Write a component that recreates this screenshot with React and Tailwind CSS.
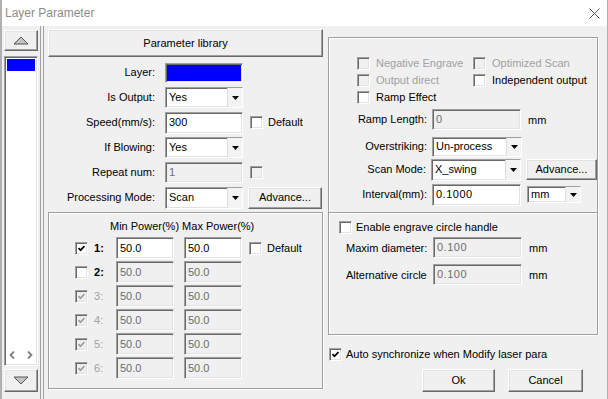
import React from 'react'

const sunken = 'border border-t-[#a0a0a0] border-l-[#a0a0a0] border-b-white border-r-white shadow-[inset_1px_1px_0_#696969,inset_-1px_-1px_0_#e3e3e3]'
const raised = 'border border-t-white border-l-white border-b-[#696969] border-r-[#696969] shadow-[inset_-1px_-1px_0_#a0a0a0,inset_1px_1px_0_#e3e3e3] bg-[#f0f0f0]'
const groupBox = 'border border-[#a0a0a0] shadow-[inset_1px_1px_0_#ffffff,1px_1px_0_#ffffff]'

function Check({ checked, disabled }) {
  return (
    <span className={`${sunken} w-[13px] h-[13px] flex items-center justify-center shrink-0 ${disabled ? 'bg-[#f0f0f0]' : 'bg-white'}`}>
      {checked && (
        <svg width="7" height="7" viewBox="0 0 7 7">
          <path d="M0.5 3 L2.5 5.2 L6.5 1" stroke={disabled ? '#a0a0a0' : '#000000'} strokeWidth="1.7" fill="none" />
        </svg>
      )}
    </span>
  )
}

function CheckLabel({ checked, disabled, children, gap = 'ml-[6px]' }) {
  return (
    <div className="flex items-center">
      <Check checked={checked} disabled={disabled} />
      <span className={`${gap} ${disabled ? 'text-[#a0a0a0]' : 'text-black'}`}>{children}</span>
    </div>
  )
}

function Field({ value, disabled, className = '' }) {
  return (
    <div className={`${sunken} px-[3px] flex items-center ${disabled ? 'bg-[#f0f0f0] text-[#6d6d6d]' : 'bg-white text-black'} ${className}`}>
      {value}
    </div>
  )
}

function Arrow() {
  return (
    <svg width="7" height="4" viewBox="0 0 7 4">
      <path d="M0 0 H7 L3.5 4 Z" fill="#000000" />
    </svg>
  )
}

function Combo({ value, className = '' }) {
  return (
    <div className={`${sunken} bg-white flex ${className}`}>
      <span className="flex-1 flex items-center pl-[3px]">{value}</span>
      <span className="w-[15px] border-l border-[#dcdcdc] bg-[#f3f3f3] flex items-center justify-center">
        <Arrow />
      </span>
    </div>
  )
}

function Button({ children, className = '' }) {
  return <div className={`${raised} flex items-center justify-center ${className}`}>{children}</div>
}

function FormRow({ label, children, mt = 'mt-[4px]' }) {
  return (
    <div className={`flex items-center h-[21px] ${mt}`}>
      <span className="w-[107px] text-right">{label}</span>
      <div className="ml-[10px] flex items-center">{children}</div>
    </div>
  )
}

function PowerRow({ n, checked, enabled, disabled, showDefault }) {
  return (
    <div className="flex items-center h-[22px]">
      <span className="ml-[26px]"><Check checked={checked} disabled={disabled} /></span>
      <span className={`ml-[6px] w-[22px] ${disabled ? 'text-[#a0a0a0]' : 'font-bold text-black'}`}>{n}:</span>
      <Field value="50.0" disabled={!enabled} className="w-[58px] h-[22px]" />
      <Field value="50.0" disabled={!enabled} className="ml-[10px] w-[58px] h-[22px]" />
      {showDefault && (
        <div className="ml-[7px]"><CheckLabel gap="ml-[5px]">Default</CheckLabel></div>
      )}
    </div>
  )
}

function RightRow({ label, children, mt }) {
  return (
    <div className={`flex items-center h-[21px] ${mt}`}>
      <span className="w-[98px] text-right">{label}</span>
      <div className="ml-[5px] flex items-center">{children}</div>
    </div>
  )
}

export default function App() {
  return (
    <div className="w-[608px] h-[399px] bg-[#f0f0f0] overflow-hidden flex flex-col border-l-2 border-r border-[#b0b0b0] font-['Liberation_Sans',Arial,sans-serif] text-[11px] leading-[13px] text-black">
      {/* Title bar */}
      <div className="h-[26px] shrink-0 bg-white flex items-center justify-between pl-[3px] pr-[7px]">
        <span className="text-[12px] text-[#8c8c8c]">Layer Parameter</span>
        <svg width="11" height="11" viewBox="0 0 11 11">
          <path d="M0.5 0.5 L10.5 10.5 M10.5 0.5 L0.5 10.5" stroke="#555555" strokeWidth="1" />
        </svg>
      </div>

      <div className="flex flex-1">
        {/* Layer list */}
        <div className="ml-[2px] w-[34px] flex flex-col">
          <Button className="mt-[4px] h-[21px]">
            <svg width="16" height="9" viewBox="0 0 16 9">
              <path d="M1 8 L8 1 L15 8 Z" fill="#c4c4c4" stroke="#555555" strokeWidth="1" />
            </svg>
          </Button>
          <div className={`${sunken} mt-[5px] h-[310px] bg-white flex flex-col p-[2px]`}>
            <div className="h-[12px] bg-[#0000ff]" />
            <div className="flex-1" />
            <div className="flex justify-between px-[2px] pb-[4px]">
              <svg width="6" height="8" viewBox="0 0 6 8">
                <path d="M5 0.5 L1.5 4 L5 7.5" stroke="#808080" strokeWidth="1.8" fill="none" />
              </svg>
              <svg width="6" height="8" viewBox="0 0 6 8">
                <path d="M1 0.5 L4.5 4 L1 7.5" stroke="#808080" strokeWidth="1.8" fill="none" />
              </svg>
            </div>
          </div>
          <Button className="mt-[3px] h-[23px]">
            <svg width="16" height="9" viewBox="0 0 16 9">
              <path d="M1 1 L8 8 L15 1 Z" fill="#c4c4c4" stroke="#555555" strokeWidth="1" />
            </svg>
          </Button>
        </div>

        {/* Separator */}
        <div className="ml-[2px] w-[4px] border-x border-[#a0a0a0]" />

        {/* Middle column */}
        <div className="ml-[4px] w-[275px] flex flex-col">
          <Button className="mt-[3px] h-[28px]">Parameter library</Button>

          <FormRow label="Layer:" mt="mt-[5px]">
            <div className={`${sunken} w-[78px] h-[20px] bg-[#0000ff]`} />
          </FormRow>
          <FormRow label="Is Output:">
            <Combo value="Yes" className="w-[78px] h-[21px]" />
          </FormRow>
          <FormRow label="Speed(mm/s):">
            <Field value="300" className="w-[78px] h-[22px]" />
            <span className="ml-[7px]"><CheckLabel gap="ml-[5px]">Default</CheckLabel></span>
          </FormRow>
          <FormRow label="If Blowing:">
            <Combo value="Yes" className="w-[78px] h-[21px]" />
          </FormRow>
          <FormRow label="Repeat num:">
            <Field value="1" disabled className="w-[78px] h-[21px]" />
            <span className="ml-[7px]"><Check disabled /></span>
          </FormRow>
          <FormRow label="Processing Mode:">
            <Combo value="Scan" className="w-[78px] h-[22px]" />
            <Button className="ml-[5px] w-[74px] h-[22px]">Advance...</Button>
          </FormRow>

          {/* Power group */}
          <div className={`${groupBox} mt-[4px] h-[177px] flex flex-col`}>
            <div className="mt-[6px] h-[14px] pl-[61px] flex items-center">Min Power(%) Max Power(%)</div>
            <div className="mt-[4px] flex flex-col gap-[2px]">
              <PowerRow n="1" checked enabled showDefault />
              <PowerRow n="2" />
              <PowerRow n="3" checked disabled />
              <PowerRow n="4" checked disabled />
              <PowerRow n="5" checked disabled />
              <PowerRow n="6" checked disabled />
            </div>
          </div>
        </div>

        {/* Right column */}
        <div className="ml-[5px] w-[270px] flex flex-col">
          <div className={`${groupBox} mt-[11px] h-[298px] flex flex-col`}>
            <div className="h-[174px] flex flex-col">
              <div className="mt-[19px] pl-[28px] flex">
                <div className="w-[116px]"><CheckLabel disabled>Negative Engrave</CheckLabel></div>
                <CheckLabel disabled>Optimized Scan</CheckLabel>
              </div>
              <div className="mt-[4px] pl-[28px] flex">
                <div className="w-[116px]"><CheckLabel disabled>Output direct</CheckLabel></div>
                <CheckLabel>Independent output</CheckLabel>
              </div>
              <div className="mt-[4px] pl-[28px] flex">
                <CheckLabel>Ramp Effect</CheckLabel>
              </div>
              <RightRow label="Ramp Length:" mt="mt-[5px]">
                <Field value="0" disabled className="w-[89px] h-[21px]" />
                <span className="ml-[7px] mt-[2px]">mm</span>
              </RightRow>
              <RightRow label="Overstriking:" mt="mt-[6px]">
                <Combo value="Un-process" className="w-[90px] h-[20px]" />
              </RightRow>
              <RightRow label="Scan Mode:" mt="mt-[2px]">
                <Combo value="X_swing" className="w-[90px] h-[22px]" />
                <Button className="ml-[5px] w-[71px] h-[21px]">Advance...</Button>
              </RightRow>
              <RightRow label="Interval(mm):" mt="mt-[4px]">
                <Field value="0.1000" className="w-[89px] h-[22px] tracking-[0.5px]" />
                <Combo value="mm" className="ml-[6px] w-[54px] h-[17px]" />
              </RightRow>
            </div>
            <div className="h-[2px] border-t border-[#a0a0a0] shadow-[inset_0_1px_0_#ffffff]" />
            <div className="flex flex-col">
              <div className="mt-[7px] pl-[10px]">
                <CheckLabel gap="ml-[4px]">Enable engrave circle handle</CheckLabel>
              </div>
              <div className="mt-[3px] pl-[17px] flex items-center h-[21px]">
                <span className="w-[87px] mt-[2px]">Maxim diameter:</span>
                <Field value="0.100" disabled className="w-[89px] h-[21px] tracking-[0.5px]" />
                <span className="ml-[7px] mt-[2px]">mm</span>
              </div>
              <div className="mt-[6px] pl-[17px] flex items-center h-[21px]">
                <span className="w-[87px] mt-[2px]">Alternative circle</span>
                <Field value="0.100" disabled className="w-[89px] h-[21px] tracking-[0.5px]" />
                <span className="ml-[7px] mt-[2px]">mm</span>
              </div>
            </div>
          </div>

          <div className="mt-[13px] pl-[1px]">
            <CheckLabel checked gap="ml-[4px]">Auto synchronize when Modify laser para</CheckLabel>
          </div>
          <div className="mt-[8px] flex">
            <Button className="ml-[94px] w-[73px] h-[23px]">Ok</Button>
            <Button className="ml-[13px] w-[75px] h-[23px]">Cancel</Button>
          </div>
        </div>
      </div>
    </div>
  )
}
